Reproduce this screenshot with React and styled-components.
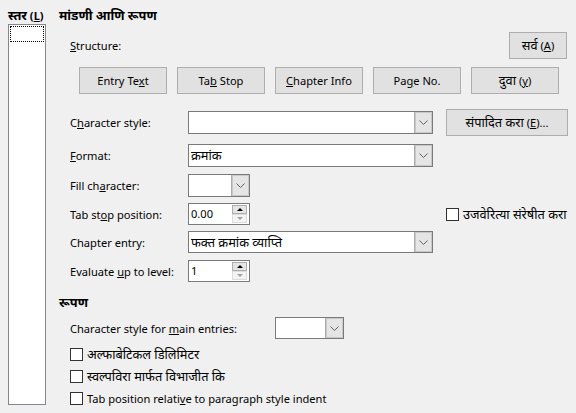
import React from 'react'
import styled, { createGlobalStyle } from 'styled-components'

const GlobalStyle = createGlobalStyle`
    html, body {
        margin: 0;
        padding: 0;
        background: #f0f0f0;
    }
    body {
        font-family: "Noto Sans", "Liberation Sans", sans-serif;
        font-size: 11.1px;
        color: #000;
    }
`

const Chevron = () => (
    <svg width="9" height="5" viewBox="0 0 9 5">
        <path d="M0.5 0.5 L4.5 4.5 L8.5 0.5" fill="none" stroke="#606060" strokeWidth="1" />
    </svg>
)

const ComboBox = ({ width, height = 23, value }) => (
    <Combo $width={width} $height={height}>
        <ComboValue>{value}</ComboValue>
        <DropButton><Chevron /></DropButton>
    </Combo>
)

const SpinField = ({ value }) => (
    <Spin>
        <ComboValue>{value}</ComboValue>
        <SpinButtons>
            <SpinHalf>
                <Arrow $up />
            </SpinHalf>
            <SpinHalf $disabled>
                <Arrow $disabled />
            </SpinHalf>
        </SpinButtons>
    </Spin>
)

const Check = ({ children }) => (
    <CheckRow>
        <Box />
        <span>{children}</span>
    </CheckRow>
)

const App = () => {
    return (
        <>
            <GlobalStyle />
            <Page>
                <LevelColumn>
                    <Title><Hi>स्तर</Hi> (<u>L</u>)</Title>
                    <LevelList>
                        <FocusItem />
                    </LevelList>
                </LevelColumn>

                <Content>
                    <Title><Hi>मांडणी आणि रूपण</Hi></Title>

                    <StructureRow>
                        <Label><u>S</u>tructure:</Label>
                        <Button $width={58}><Hi>सर्व</Hi> (<u>A</u>)</Button>
                    </StructureRow>

                    <ButtonRow>
                        <Button>Entry Te<u>x</u>t</Button>
                        <Button>Ta<u>b</u> Stop</Button>
                        <Button><u>C</u>hapter Info</Button>
                        <Button>Pa<u>g</u>e No.</Button>
                        <Button><Hi>दुवा</Hi> (<u>y</u>)</Button>
                    </ButtonRow>

                    <FormRow $top={15}>
                        <Label>C<u>h</u>aracter style:</Label>
                        <ComboBox width={245} />
                        <Button $width={122}><Hi>संपादित करा</Hi> (<u>E</u>)...</Button>
                    </FormRow>

                    <FormRow $top={8}>
                        <Label><u>F</u>ormat:</Label>
                        <ComboBox width={245} value={<Hi>क्रमांक</Hi>} />
                    </FormRow>

                    <FormRow $top={7}>
                        <Label>Fill ch<u>a</u>racter:</Label>
                        <ComboBox width={62} />
                    </FormRow>

                    <FormRow $top={6}>
                        <Label>Tab st<u>o</u>p position:</Label>
                        <SpinField value="0.00" />
                        <Check><Hi>उजवेरित्या संरेषीत करा</Hi></Check>
                    </FormRow>

                    <FormRow $top={6}>
                        <Label>Chapter entry:</Label>
                        <ComboBox width={245} height={22} value={<Hi>फक्त क्रमांक व्याप्ति</Hi>} />
                    </FormRow>

                    <FormRow $top={7}>
                        <Label>Evaluate <u>u</u>p to level:</Label>
                        <SpinField value="1" />
                    </FormRow>

                    <SubTitle><Hi>रूपण</Hi></SubTitle>

                    <Indented>
                        <MainEntriesRow>
                            <span>Character style for <u>m</u>ain entries:</span>
                            <ComboBox width={69} height={22} />
                        </MainEntriesRow>
                        <Check><Hi>अल्फाबेटिकल डिलिमिटर</Hi></Check>
                        <Check><Hi>स्वल्पविरा मार्फत विभाजीत कि</Hi></Check>
                        <Check>Tab position relati<u>v</u>e to paragraph style indent</Check>
                    </Indented>
                </Content>
            </Page>
        </>
    )
}

export default App


// ================================= styling =================================

const Page = styled.div`
    display: flex;
    width: 576px;
    height: 413px;
    box-sizing: border-box;
    padding: 6px 9px 0 8px;
    overflow: hidden;
`

// devanagari runs come out smaller than the latin ones, bump them
const Hi = styled.span`
    font-size: 12.8px;
`

// left "level" list
const LevelColumn = styled.div`
    display: flex;
    flex-direction: column;
    flex-shrink: 0;
    width: 38px;
    margin-right: 13px;
`

const Title = styled.div`
    font-weight: bold;
    height: 18px;
    line-height: 18px;
    white-space: nowrap;
`

const LevelList = styled.div`
    height: 381px;
    box-sizing: border-box;
    border: 1px solid #828790;
    background: #fff;
    padding: 1px;
`

const FocusItem = styled.div`
    height: 16px;
    border: 1px dotted #000;
    box-sizing: border-box;
`

const Content = styled.div`
    flex: 1;
    min-width: 0;
    display: flex;
    flex-direction: column;
`

const Label = styled.span`
    white-space: nowrap;
`

const StructureRow = styled.div`
    display: flex;
    align-items: center;
    justify-content: space-between;
    height: 27px;
    margin-top: 8px;
    padding-left: 11px;
`

const ButtonRow = styled.div`
    display: flex;
    gap: 10px;
    margin-top: 8px;
    padding-left: 20px;
`

const Button = styled.div`
    width: ${p => p.$width || 88}px;
    height: 27px;
    line-height: 25px;
    text-align: center;
    box-sizing: border-box;
    background: #e1e1e1;
    border: 1px solid #adadad;
    white-space: nowrap;
`

// label | field | extra (edit button, checkbox)
const FormRow = styled.div`
    display: grid;
    grid-template-columns: 105px 245px auto;
    column-gap: 13px;
    align-items: center;
    justify-items: start;
    margin-top: ${p => p.$top}px;
    padding-left: 11px;
    min-height: 22px;
`

const Combo = styled.div`
    display: flex;
    width: ${p => p.$width}px;
    height: ${p => p.$height}px;
    box-sizing: border-box;
    border: 1px solid #7a7a7a;
    background: #fff;
`

const ComboValue = styled.div`
    flex: 1;
    padding-left: 2px;
    line-height: 20px;
    white-space: nowrap;
    overflow: hidden;
`

const DropButton = styled.div`
    width: 17px;
    display: flex;
    align-items: center;
    justify-content: center;
    background: #e5e5e5;
    border-left: 1px solid #adadad;
    box-shadow: inset 0 0 0 1px #c8c8c8;
`

const Spin = styled.div`
    display: flex;
    width: 62px;
    height: 22px;
    box-sizing: border-box;
    border: 1px solid #7a7a7a;
    background: #fff;
`

const SpinButtons = styled.div`
    display: flex;
    flex-direction: column;
    width: 15px;
    padding: 1px 2px 1px 0;
`

const SpinHalf = styled.div`
    flex: 1;
    display: flex;
    align-items: center;
    justify-content: center;
    background: ${p => p.$disabled ? '#f4f4f4' : '#e5e5e5'};
    border: 1px solid ${p => p.$disabled ? '#dcdcdc' : '#adadad'};
`

const Arrow = styled.div`
    width: 0;
    height: 0;
    border-left: 3px solid transparent;
    border-right: 3px solid transparent;
    ${p => p.$up
        ? 'border-bottom: 3px solid #000;'
        : `border-top: 3px solid ${p.$disabled ? '#a0a0a0' : '#000'};`}
`

const SubTitle = styled(Title)`
    margin-top: 11px;
`

const Indented = styled.div`
    display: flex;
    flex-direction: column;
    padding-left: 11px;
`

const MainEntriesRow = styled.div`
    display: flex;
    align-items: center;
    gap: 38px;
    margin-top: 6px;
    margin-bottom: 4px;
`

const CheckRow = styled.label`
    display: flex;
    align-items: center;
    gap: 4px;
    height: 22px;
    white-space: nowrap;
`

const Box = styled.span`
    width: 13px;
    height: 13px;
    box-sizing: border-box;
    border: 1px solid #333;
    background: #fff;
    flex-shrink: 0;
`
